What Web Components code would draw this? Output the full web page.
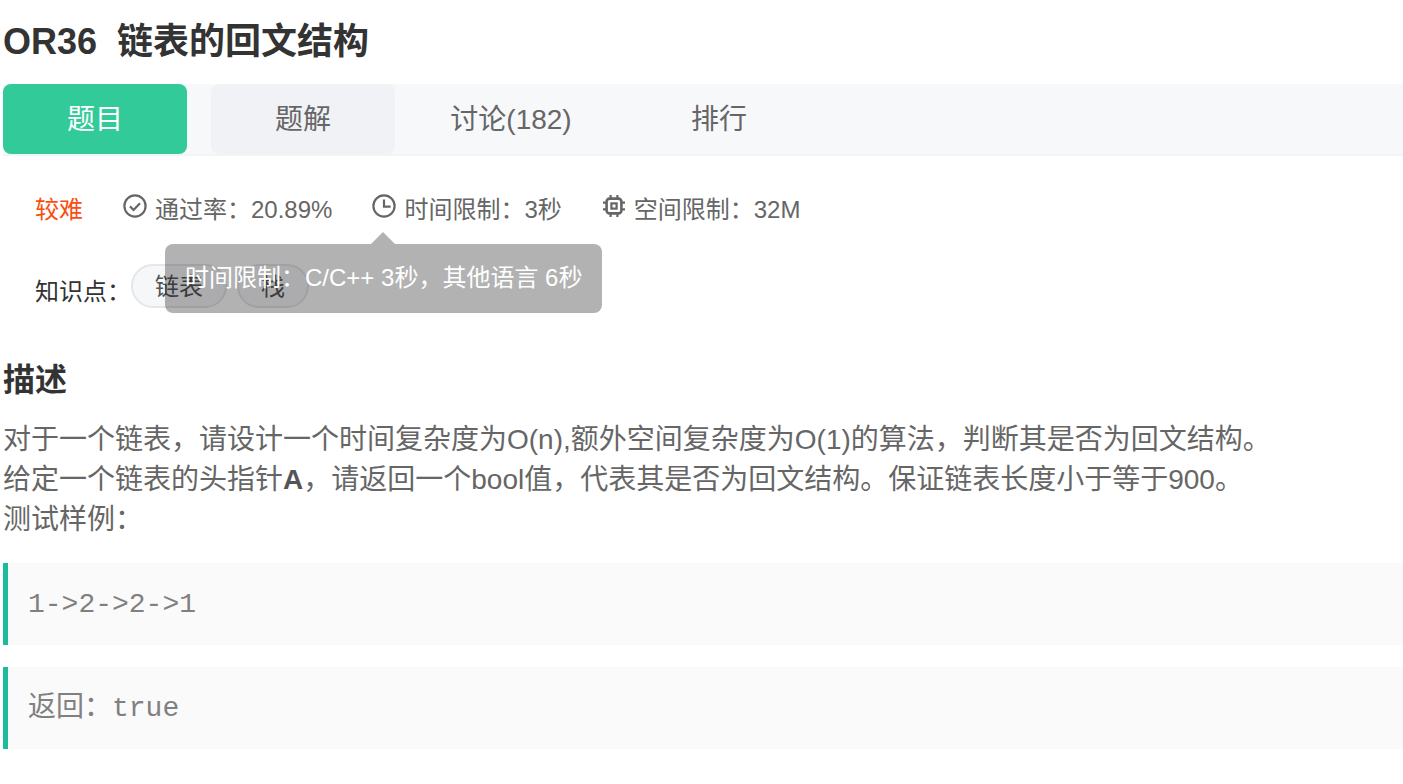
<!DOCTYPE html>
<html lang="zh">
<head>
<meta charset="utf-8">
<title>OR36 链表的回文结构</title>
<style>
    html, body { margin: 0; background: #fff; overflow: hidden; }
    body {
        font-family: "Liberation Sans", "Noto Sans CJK SC", sans-serif;
        color: #333;
    }
</style>
</head>
<body>
<question-page></question-page>

<script>
class TabBar extends HTMLElement {
    constructor() {
        super();
        this.attachShadow({ mode: 'open' });
        this.shadowRoot.innerHTML = `
            <style>
                :host {
                    display: flex;
                    gap: 24px;
                    height: 70px;
                    background: #f7f8fa;
                    border-bottom: 2px solid #f3f4f6;
                }
                div {
                    width: 184px;
                    height: 70px;
                    line-height: 72px;
                    text-align: center;
                    font-size: 28px;
                    color: #666;
                    border-radius: 8px;
                }
                .active { background: #32ca99; color: #fff; }
                .hover { background: #f0f2f6; }
            </style>
            <div class="active">题目</div>
            <div class="hover">题解</div>
            <div>讨论(182)</div>
            <div>排行</div>
        `;
    }
}

class MetaItem extends HTMLElement {
    constructor() {
        super();
        this.attachShadow({ mode: 'open' });
        this.shadowRoot.innerHTML = `
            <style>
                :host {
                    display: inline-flex;
                    align-items: center;
                    gap: 8px;
                    font-size: 24px;
                    color: #666;
                    position: relative;
                }
                svg { width: 24px; height: 24px; fill: none; stroke: #666; stroke-width: 2.2; display: block; margin-top: -2px; }
            </style>
            <svg viewBox="0 0 24 24"></svg>
            <slot></slot>
        `;
        const icons = {
            check: '<circle cx="12" cy="12" r="10.6"/><path d="M7 12.4l3.6 3.6 6.4-6.8"/>',
            clock: '<circle cx="12" cy="12" r="10.6"/><path d="M12 5.6v7h6.6"/>',
            chip: '<rect x="4.6" y="4.6" width="14.8" height="14.8" rx="3" stroke-width="2.6"/><rect x="9.4" y="9.4" width="5.2" height="5.2" stroke-width="2.2"/><path d="M8.6 1v3.6M15.4 1v3.6M8.6 19.4V23M15.4 19.4V23M1 8.6h3.6M1 15.4h3.6M19.4 8.6H23M19.4 15.4H23"/>'
        };
        this.shadowRoot.querySelector('svg').innerHTML = icons[this.getAttribute('icon')];
    }
}

class TagPill extends HTMLElement {
    constructor() {
        super();
        this.attachShadow({ mode: 'open' });
        this.shadowRoot.innerHTML = `
            <style>
                :host {
                    display: inline-block;
                    box-sizing: border-box;
                    height: 44px;
                    line-height: 42px;
                    padding: 0 22px;
                    font-size: 24px;
                    color: #555;
                    background: #f6f7f9;
                    border: 2px solid #e4e6eb;
                    border-radius: 22px;
                }
            </style>
            <slot></slot>
        `;
    }
}

class TipBubble extends HTMLElement {
    constructor() {
        super();
        this.attachShadow({ mode: 'open' });
        this.shadowRoot.innerHTML = `
            <style>
                :host {
                    position: absolute;
                    left: 165px;
                    top: 244px;
                    box-sizing: border-box;
                    height: 69px;
                    padding: 19px 20px 0;
                    font-size: 24px;
                    line-height: 30px;
                    color: #fff;
                    white-space: nowrap;
                    background: rgba(0, 0, 0, .3);
                    border-radius: 8px;
                }
                i {
                    position: absolute;
                    left: 206px;
                    top: -12px;
                    width: 0;
                    height: 0;
                    border: 12px solid transparent;
                    border-top: 0;
                    border-bottom-color: rgba(0, 0, 0, .3);
                }
            </style>
            <i></i>
            <slot></slot>
        `;
    }
}

class CodeBlock extends HTMLElement {
    constructor() {
        super();
        this.attachShadow({ mode: 'open' });
        this.shadowRoot.innerHTML = `
            <style>
                :host {
                    display: block;
                    box-sizing: border-box;
                    height: 82px;
                    padding-left: 20px;
                    line-height: 84px;
                    font-family: "Liberation Mono", "Noto Sans CJK SC", monospace;
                    font-size: 28px;
                    color: #808080;
                    background: #fafafa;
                    border-left: 5px solid #1abc9c;
                }
            </style>
            <slot></slot>
        `;
    }
}

class QuestionPage extends HTMLElement {
    constructor() {
        super();
        this.attachShadow({ mode: 'open' });
        this.shadowRoot.innerHTML = `
            <style>
                :host { display: block; padding-left: 3px; position: relative; }
                h1 {
                    margin: 0;
                    height: 84px;
                    line-height: 84px;
                    font-size: 36px;
                    white-space: pre;
                    color: #333;
                }
                .meta {
                    display: flex;
                    align-items: center;
                    height: 40px;
                    margin: 31px 0 0 32px;
                }
                .level { font-size: 24px; color: #fa4e0f; margin-right: 40px; }
                .meta meta-item { margin-right: 40px; }
                .know {
                    display: flex;
                    align-items: center;
                    height: 44px;
                    margin: 37px 0 0 32px;
                    font-size: 24px;
                    color: #333;
                }
                .know span { margin-top: 6px; }
                .know tag-pill + tag-pill { margin-left: 10px; }
                h2 {
                    margin: 0;
                    padding-top: 49px;
                    font-size: 32px;
                    line-height: 46px;
                    color: #333;
                }
                .desc {
                    margin-top: 17px;
                    font-size: 28px;
                    line-height: 40px;
                    color: #666;
                    white-space: nowrap;
                }
                .desc b { color: #555; }
                .codes { display: flex; flex-direction: column; gap: 22px; margin-top: 23px; }
            </style>
            <h1>OR36  链表的回文结构</h1>
            <tab-bar></tab-bar>
            <div class="meta">
                <span class="level">较难</span>
                <meta-item icon="check">通过率：20.89%</meta-item>
                <meta-item icon="clock">时间限制：3秒</meta-item>
                <meta-item icon="chip">空间限制：32M</meta-item>
            </div>
            <div class="know">
                <span>知识点：</span>
                <tag-pill>链表</tag-pill>
                <tag-pill>栈</tag-pill>
            </div>
            <tip-bubble>时间限制：C/C++ 3秒，其他语言 6秒</tip-bubble>
            <h2>描述</h2>
            <div class="desc">
                对于一个链表，请设计一个时间复杂度为O(n),额外空间复杂度为O(1)的算法，判断其是否为回文结构。<br>
                给定一个链表的头指针<b>A</b>，请返回一个bool值，代表其是否为回文结构。保证链表长度小于等于900。<br>
                测试样例：
            </div>
            <div class="codes">
                <code-block>1-&gt;2-&gt;2-&gt;1</code-block>
                <code-block>返回：true</code-block>
            </div>
        `;
    }
}

customElements.define('tab-bar', TabBar);
customElements.define('meta-item', MetaItem);
customElements.define('tag-pill', TagPill);
customElements.define('tip-bubble', TipBubble);
customElements.define('code-block', CodeBlock);
customElements.define('question-page', QuestionPage);
</script>
</body>
</html>
